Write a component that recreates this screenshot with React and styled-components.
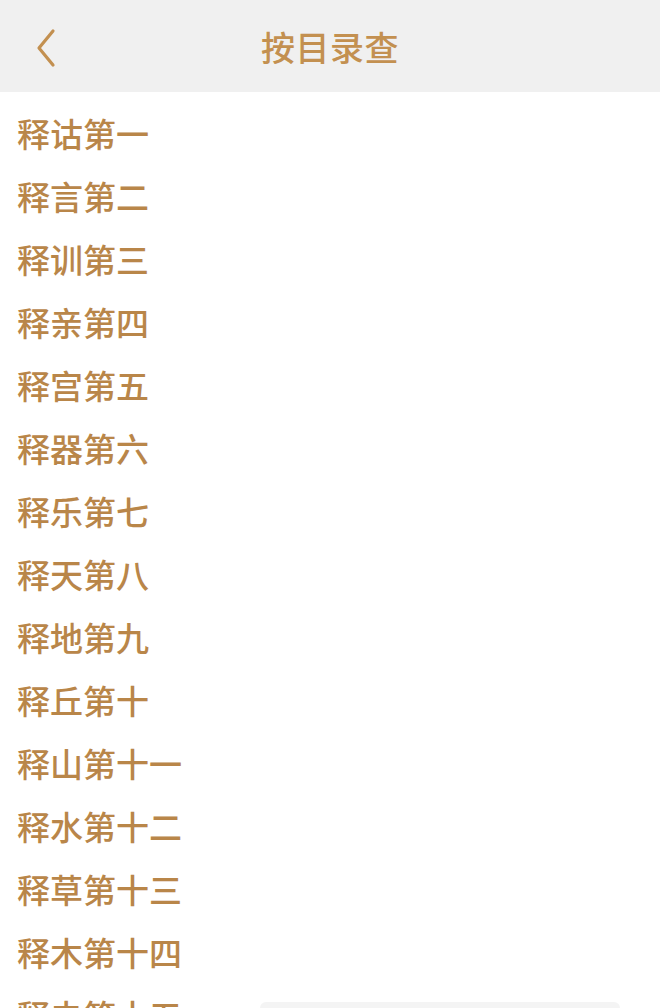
import React from 'react'
import styled, { createGlobalStyle } from 'styled-components'

const GlobalStyle = createGlobalStyle`
  html, body {
    margin: 0;
    padding: 0;
    background: #ffffff;
  }
  body {
    font-family: "Noto Sans CJK SC", "Noto Sans", sans-serif;
  }
`

const Page = styled.div`
  position: relative;
  width: 660px;
  height: 1008px;
  overflow: hidden;
  background: #ffffff;
`

const Header = styled.div`
  height: 92px;
  background: #f0f0f0;
  display: flex;
  align-items: center;
  justify-content: center;
  position: relative;
`

const Back = styled.button`
  position: absolute;
  left: 26px;
  top: 26px;
  width: 40px;
  height: 44px;
  border: none;
  background: transparent;
  padding: 0;
  display: flex;
  align-items: center;
  justify-content: center;
`

const Title = styled.h1`
  margin: 0;
  font-size: 34px;
  font-weight: 500;
  color: #c39050;
  letter-spacing: 0.5px;
`

const List = styled.ul`
  list-style: none;
  margin: 0;
  padding: 10px 0 0 0;
`

const Item = styled.li`
  height: 63px;
  line-height: 63px;
  padding-left: 17px;
  font-size: 33px;
  font-weight: 500;
  color: #b98649;
  white-space: nowrap;
`

const Toast = styled.div`
  position: absolute;
  left: 260px;
  bottom: -14px;
  width: 360px;
  height: 20px;
  border-radius: 6px;
  background: #f4f4f4;
`

const chapters = [
  '释诂第一', '释言第二', '释训第三', '释亲第四', '释宫第五',
  '释器第六', '释乐第七', '释天第八', '释地第九', '释丘第十',
  '释山第十一', '释水第十二', '释草第十三', '释木第十四', '释虫第十五',
]

const App = () => {
  return (
    <Page>
      <GlobalStyle />
      <Header>
        <Back aria-label="返回">
          <svg width="24" height="40" viewBox="0 0 24 40">
            <path d="M19 3 L5 20 L19 37" fill="none" stroke="#c39050" strokeWidth="3.2" strokeLinecap="round" strokeLinejoin="round" />
          </svg>
        </Back>
        <Title>按目录查</Title>
      </Header>
      <List>
        {chapters.map((c) => (
          <Item key={c}>{c}</Item>
        ))}
      </List>
      <Toast />
    </Page>
  )
}

export default App
